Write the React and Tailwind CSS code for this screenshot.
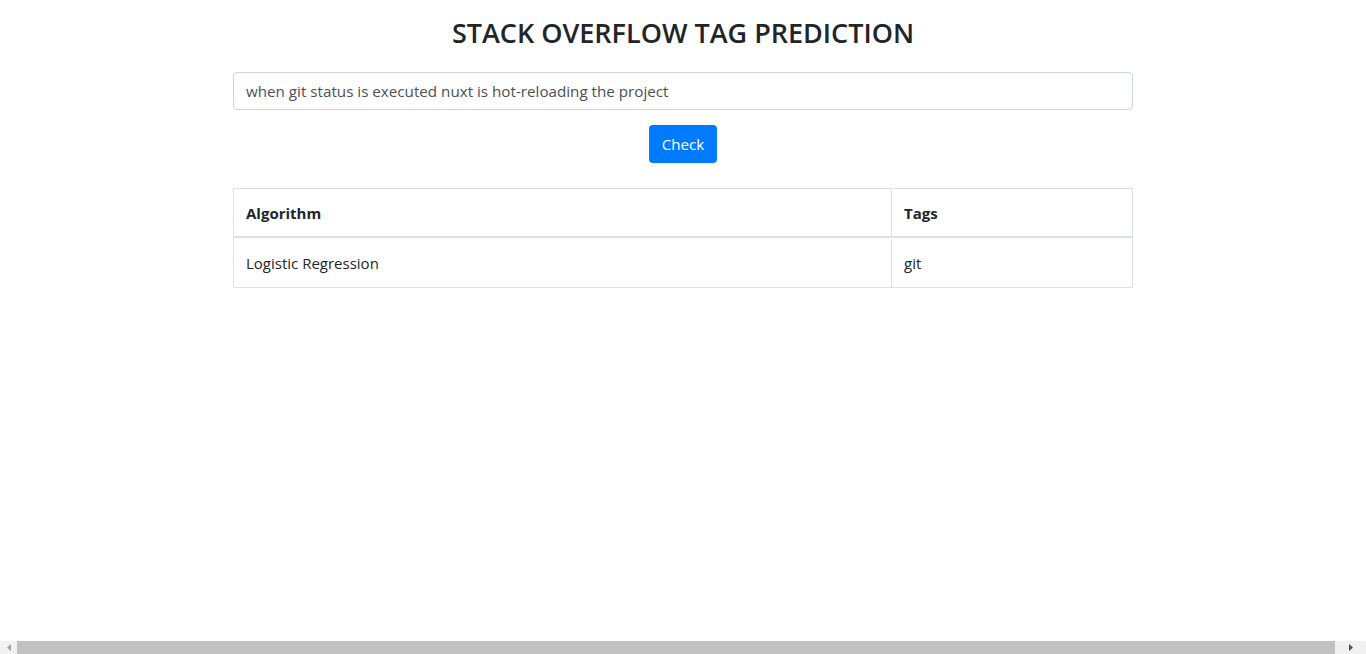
export default function App() {
  const font = { fontFamily: '"Open Sans", "Noto Sans", Arial, sans-serif' };
  return (
    <div className="h-[654px] w-[1366px] flex flex-col bg-white overflow-hidden" style={font}>
      <div className="flex-1 flex flex-col items-center">
        <h2 className="mt-[14px] text-[27px] leading-[37px] font-semibold text-[#212529]">
          STACK OVERFLOW TAG PREDICTION
        </h2>
        <div className="mt-[21px] w-[900px] h-[38px] border border-[#ced4da] rounded-[4px] flex items-center px-[12px] text-[15.2px] text-[#495057]">
          when git status is executed nuxt is hot-reloading the project
        </div>
        <button className="mt-[15px] h-[38px] w-[68px] rounded-[4px] bg-[#007bff] text-white text-[15.2px] flex items-center justify-center">
          Check
        </button>
        <div className="mt-[25px] w-[900px] border border-[#dee2e6] text-[15px] text-[#212529]">
          <div className="flex border-b-2 border-[#dee2e6] h-[49px] pt-[1px]">
            <div className="w-[658px] border-r border-[#dee2e6] flex items-center px-[12px] font-bold">Algorithm</div>
            <div className="flex-1 flex items-center px-[12px] font-bold">Tags</div>
          </div>
          <div className="flex h-[49px] pt-[1px]">
            <div className="w-[658px] border-r border-[#dee2e6] flex items-center px-[12px]">Logistic Regression</div>
            <div className="flex-1 flex items-center px-[12px]">git</div>
          </div>
        </div>
      </div>
      <div className="h-[13px] bg-[#f1f1f1] flex items-center">
        <div className="w-[17px] flex items-center justify-center">
          <svg width="4" height="7" viewBox="0 0 4 7"><path d="M4 0 L0 3.5 L4 7 Z" fill="#a3a3a3" /></svg>
        </div>
        <div className="flex-1 h-[13px] bg-[#c1c1c1]" />
        <div className="w-[31px] flex items-center justify-center">
          <svg width="4" height="7" viewBox="0 0 4 7"><path d="M0 0 L4 3.5 L0 7 Z" fill="#505050" /></svg>
        </div>
      </div>
    </div>
  );
}
